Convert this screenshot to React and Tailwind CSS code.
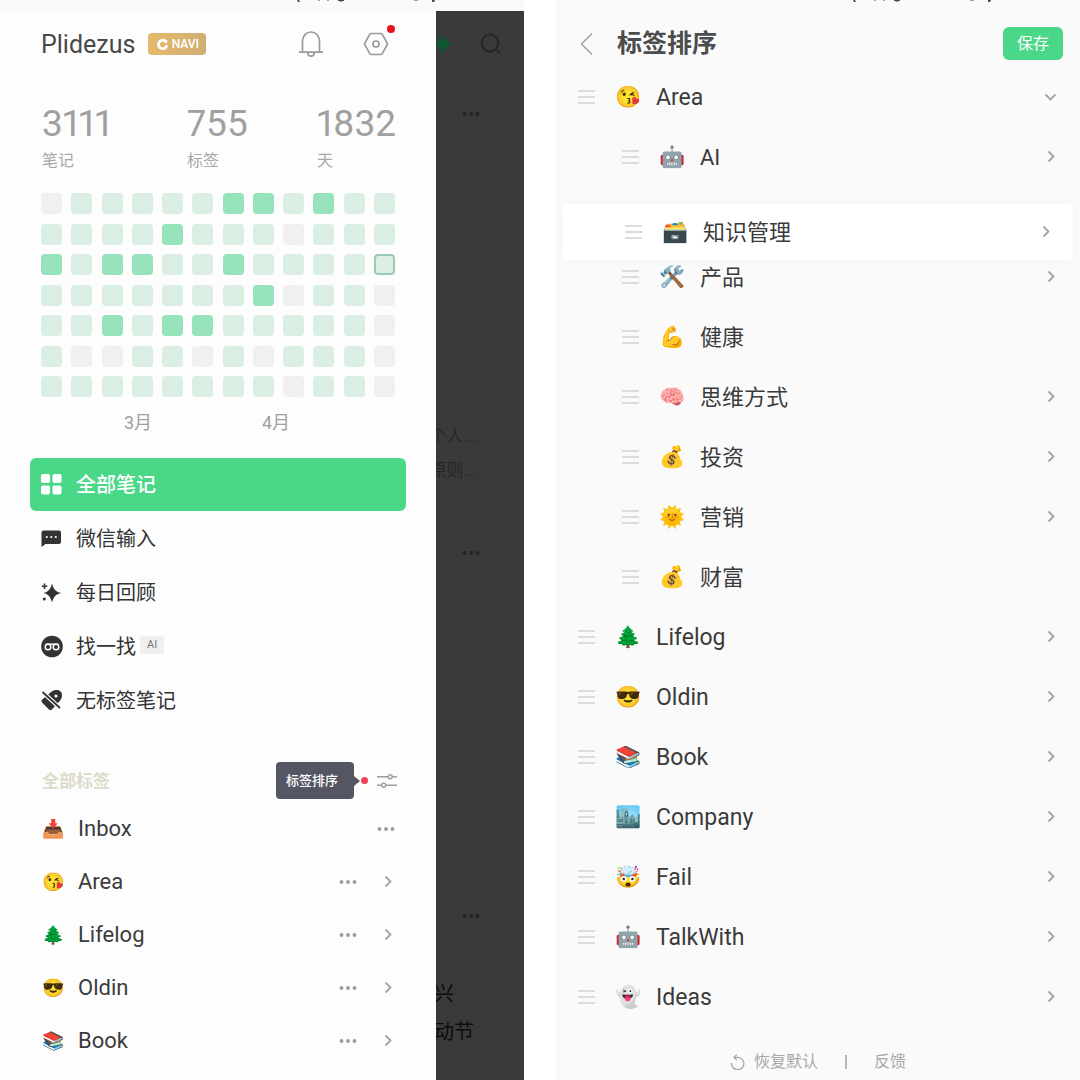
import React from "react";

const LEVELS = [
  "011111221211",
  "111121110111",
  "212211211113",
  "111111120110",
  "112122111110",
  "100110101110",
  "111111110110",
];

const CELL = {
  0: "bg-[#f0f0f1]",
  1: "bg-[#daeee4]",
  2: "bg-[#96e3bb]",
  3: "bg-[#daeee4] border-2 border-[#9cc8b3]",
};

const STATS = [
  { value: "3111", label: "笔记", width: "w-[145px]" },
  { value: "755", label: "标签", width: "w-[130px]" },
  { value: "1832", label: "天", width: "w-[78px]" },
];

const TAGS = [
  { emoji: "📥", name: "Inbox", leaf: true },
  { emoji: "😘", name: "Area" },
  { emoji: "🌲", name: "Lifelog" },
  { emoji: "😎", name: "Oldin" },
  { emoji: "📚", name: "Book" },
];

const SORT_ROWS = [
  { emoji: "😘", name: "Area", open: true },
  { emoji: "🤖", name: "AI", child: true },
  { emoji: "🗃️", name: "知识管理", child: true, dragged: true },
  { emoji: "🛠️", name: "产品", child: true },
  { emoji: "💪", name: "健康", child: true, leaf: true },
  { emoji: "🧠", name: "思维方式", child: true },
  { emoji: "💰", name: "投资", child: true },
  { emoji: "🌞", name: "营销", child: true },
  { emoji: "💰", name: "财富", child: true, leaf: true },
  { emoji: "🌲", name: "Lifelog" },
  { emoji: "😎", name: "Oldin" },
  { emoji: "📚", name: "Book" },
  { emoji: "🏙️", name: "Company" },
  { emoji: "🤯", name: "Fail" },
  { emoji: "🤖", name: "TalkWith" },
  { emoji: "👻", name: "Ideas" },
];

const Star = ({ className }) => (
  <svg viewBox="0 0 22 22" className={className} fill="currentColor" aria-hidden="true">
    <path d="M12 1.500c1.500 5.500 3.100 8 9.500 9.500-6.400 1.500-8 4-9.500 9.500-1.500-5.500-3.100-8-8.500-9.500 5.400-1.500 7-4 8.500-9.500z" />
    <path d="M3.700 1.500h1.600v2h2v1.600h-2v2H3.700v-2h-2V3.500h2z" />
    <circle cx="4.300" cy="17" r="1.500" />
  </svg>
);

const Dots = ({ className }) => (
  <svg viewBox="0 0 18 6" className={className} fill="currentColor" aria-hidden="true">
    <circle cx="2.500" cy="3" r="1.900" />
    <circle cx="9" cy="3" r="1.900" />
    <circle cx="15.500" cy="3" r="1.900" />
  </svg>
);

const Chevron = ({ open }) => (
  <svg
    viewBox="0 0 14 14"
    className="h-[14px] w-[14px] text-[#a3a3a3]"
    fill="none"
    stroke="currentColor"
    strokeWidth="1.800"
    aria-hidden="true"
  >
    {open ? <path d="M1.500 4.500l5 5 5-5" /> : <path d="M4.500 1.500l5 5-5 5" />}
  </svg>
);

const Handle = () => (
  <svg viewBox="0 0 17 14" className="h-[14px] w-[17px]" stroke="#dcdcdc" strokeWidth="2" aria-hidden="true">
    <path d="M0 1h17M0 7h17M0 13h17" />
  </svg>
);

const StatusBar = () => (
  <div className="h-[11px] shrink-0 bg-[#fafafa] pr-[68px]">
    <svg viewBox="0 0 160 3" className="ml-auto h-[3px] w-[160px]" fill="#4a4a4a" aria-hidden="true">
      <path d="M1 0h2l1 2H2zM42 0h6v1h-1l-2 .8-2-.8h-1zM136 0h3l-1 2h-2z" />
      <path d="M22 0h2v1h-2zM31 0h2v1h-2zM118 0h4v1h-4z" opacity=".5" />
    </svg>
  </div>
);

const icons = {
  grid: (
    <g>
      <rect x="1" y="1" width="9" height="9" rx="2" />
      <rect x="12.500" y="1" width="9" height="9" rx="2" />
      <rect x="1" y="12.500" width="9" height="9" rx="2" />
      <rect x="12.500" y="12.500" width="9" height="9" rx="2" />
    </g>
  ),
  chat: (
    <g>
      <path d="M3.500 3.500h15.500a2 2 0 0 1 2 2v9.500a2 2 0 0 1-2 2H5.500L1.500 20V5.500a2 2 0 0 1 2-2z" />
      <g fill="#fdfdfd">
        <circle cx="6.800" cy="10" r="1.100" />
        <circle cx="11.300" cy="10" r="1.100" />
        <circle cx="15.800" cy="10" r="1.100" />
      </g>
    </g>
  ),
  find: (
    <g>
      <circle cx="12" cy="11.500" r="10.800" />
      <g fill="none" stroke="#fdfdfd" strokeWidth="1.500">
        <circle cx="8" cy="12" r="2.800" />
        <circle cx="16" cy="12" r="2.800" />
        <path d="M5.500 9.200h13" />
      </g>
    </g>
  ),
  untag: (
    <g>
      <path d="M10.500 3.500C12.500 1.500 15 1 17 1a5 5 0 0 1 5 5c0 2-.6 4.300-2.500 6.200l-7.700 8.300a2 2 0 0 1-2.800 0L2 13.600a2 2 0 0 1 0-2.800z" />
      <circle cx="16" cy="7" r="1.600" fill="#fdfdfd" />
      <path d="M1 1.500l20.500 19" stroke="#fdfdfd" strokeWidth="4.200" />
      <path d="M2.500 3l17.500 16" stroke="currentColor" strokeWidth="1.700" />
    </g>
  ),
};

const MENU = [
  { icon: "grid", name: "全部笔记", active: true },
  { icon: "chat", name: "微信输入" },
  { icon: "star", name: "每日回顾" },
  { icon: "find", name: "找一找", badge: "AI" },
  { icon: "untag", name: "无标签笔记" },
];

function Drawer() {
  return (
    <section className="min-w-0 flex-1 bg-[#fdfdfd]">
      <header className="flex h-[66px] items-center pr-[47px] pl-[41px]">
        <h1 className="pt-px text-[25px] leading-8 text-[#484848]">Plidezus</h1>
        <span className="ml-[13px] flex h-[22px] w-[58px] items-center justify-center gap-[3px] rounded bg-gradient-to-r from-[#e6b96c] to-[#cfae74] text-[12px] font-medium text-white">
          <svg viewBox="0 0 13 13" className="h-[13px] w-[13px]" aria-hidden="true">
            <path d="M8.500 2.700a4.200 4.200 0 1 0 2.300 4.600" fill="none" stroke="white" strokeWidth="2.800" />
            <path d="M7.500 1l4 1.200-.8 3.300-2.700-1z" fill="white" />
          </svg>
          NAVI
        </span>
        <button type="button" aria-label="通知" className="ml-auto">
          <svg viewBox="0 0 26 28" className="h-7 w-[26px]" fill="none" stroke="#9b9b9b" strokeWidth="1.700" aria-hidden="true">
            <path d="M4.500 22V11a8.500 9 0 0 1 17 0v11M1 22.200h24" />
            <path d="M9.800 23a3.200 3.200 0 0 0 6.400 0" />
          </svg>
        </button>
        <button type="button" aria-label="设置" className="relative ml-[39px]">
          <svg viewBox="0 0 26 26" className="h-[26px] w-[26px]" fill="none" stroke="#9b9b9b" strokeWidth="1.700" aria-hidden="true">
            <path d="M8 2.500h10a1.500 1.500 0 0 1 1.200.7l5 9a1.500 1.500 0 0 1 0 1.500l-5 9a1.500 1.500 0 0 1-1.200.8H8a1.500 1.500 0 0 1-1.200-.8l-5-9a1.500 1.500 0 0 1 0-1.500l5-9A1.500 1.500 0 0 1 8 2.500z" />
            <circle cx="13" cy="13" r="3" />
          </svg>
          <span className="absolute -top-[6px] -right-[6px] h-2 w-2 rounded-full bg-[#e8131a]" />
        </button>
      </header>

      <dl className="flex justify-between pt-[27px] pr-[41px] pl-[42px]">
        {STATS.map((s) => (
          <div key={s.label} className={`flex flex-col-reverse gap-[5px] ${s.width}`}>
            <dt className="text-[16px] leading-6 text-[#a8a8a8]">{s.label}</dt>
            <dd className="text-[37px] leading-10 text-[#a0a0a0] proportional-nums">{s.value}</dd>
          </div>
        ))}
      </dl>

      <div className="mt-[20px] mr-[41px] ml-[41px] flex h-[204px] flex-col justify-between">
        {LEVELS.map((row, i) => (
          <div key={i} className="flex justify-between">
            {row.split("").map((v, j) => (
              <span key={j} className={`h-[21px] w-[21px] rounded ${CELL[v]}`} />
            ))}
          </div>
        ))}
      </div>
      <div className="mt-[14px] flex gap-[106px] pl-[124px] text-[18px] leading-6 text-[#a0a0a0]">
        <span className="w-8">3月</span>
        <span className="w-8">4月</span>
      </div>

      <nav className="mt-[23px] flex flex-col gap-px px-[30px]">
        {MENU.map((m) => (
          <a
            key={m.name}
            href="#"
            className={`flex h-[53px] items-center rounded-md pl-[10px] text-[20px] ${
              m.active ? "bg-[#4ad888] font-medium text-white" : "text-[#333333]"
            }`}
          >
            {m.icon === "star" ? (
              <Star className="h-[22px] w-[22px]" />
            ) : (
              <svg viewBox="0 0 23 23" className="h-[23px] w-[23px]" fill="currentColor" aria-hidden="true">
                {icons[m.icon]}
              </svg>
            )}
            <span className={m.icon === "star" ? "ml-[14px] pt-px" : "ml-[13px] pt-px"}>{m.name}</span>
            {m.badge && (
              <span className="mb-[3px] ml-1 rounded bg-[#efefef] px-[7px] text-[11px] leading-[18px] text-[#777777]">
                {m.badge}
              </span>
            )}
          </a>
        ))}
      </nav>

      <div className="mt-[35px] flex h-[37px] items-center pr-[39px] pl-[42px]">
        <h2 className="text-[17px] leading-6 font-bold text-[#dcdac9]">全部标签</h2>
        <div className="ml-auto flex items-center">
          <span className="w-[78px] rounded bg-[#545663] pl-[10px] text-[13px] leading-[37px] font-medium text-white">
            标签排序
          </span>
          <svg viewBox="0 0 6 10" className="h-[10px] w-[6px]" fill="#545663" aria-hidden="true">
            <path d="M0 0l6 5-6 5z" />
          </svg>
          <span className="ml-[1px] h-[7px] w-[7px] rounded-full bg-[#f04458]" />
          <button type="button" aria-label="标签排序" className="ml-[9px]">
            <svg viewBox="0 0 20 14" className="h-[14px] w-5" fill="none" stroke="#9c9c9c" strokeWidth="1.400" aria-hidden="true">
              <path d="M0 2.800h11M15.500 2.800H20M0 11.300h4.500M9 11.300H20" />
              <circle cx="13.200" cy="2.800" r="2" />
              <circle cx="6.700" cy="11.300" r="2" />
            </svg>
          </button>
        </div>
      </div>

      <ul className="mt-[3px]">
        {TAGS.map((t) => (
          <li key={t.name} className="flex h-[53px] items-center pr-[41px] pl-[42px]">
            <span className="w-[36px] text-[18px]">{t.emoji}</span>
            <span className="text-[22px] leading-7 text-[#3c3c3c]">{t.name}</span>
            <button type="button" aria-label={`${t.name} 更多`} className="ml-auto">
              <Dots className="h-[6px] w-[18px] text-[#9c9c9c]" />
            </button>
            {!t.leaf && (
              <button type="button" aria-label={`展开 ${t.name}`} className="ml-[24px]">
                <Chevron />
              </button>
            )}
          </li>
        ))}
      </ul>
    </section>
  );
}

function NotesBehind() {
  return (
    <aside className="w-[88px] shrink-0 overflow-hidden bg-[#3a3a3a] text-[#222222]">
      <div className="flex h-[66px] items-center justify-between pr-[22px]">
        <Star className="-ml-[6px] h-6 w-6 shrink-0 text-[#0b5a2f]" />
        <svg viewBox="0 0 22 22" className="h-[22px] w-[22px]" fill="none" stroke="#242424" strokeWidth="1.800" aria-hidden="true">
          <circle cx="10" cy="10" r="8.300" />
          <path d="M16.500 17l3.500 3" />
        </svg>
      </div>
      <Dots className="mt-[34px] ml-[25px] h-[6px] w-5" />
      <div className="mt-[302px] flex w-[41px] flex-col items-end text-[17px] leading-[34px] whitespace-nowrap text-[#262626]">
        <p>个人...</p>
        <p>原则...</p>
      </div>
      <Dots className="mt-[63px] ml-[25px] h-[6px] w-5" />
      <Dots className="mt-[357px] ml-[25px] h-[6px] w-5" />
      <div className="mt-[56px] text-[20px] leading-[38px] whitespace-nowrap text-[#0c0c0c]">
        <p className="-ml-[2px]">兴</p>
        <p className="-ml-[2px]">动节</p>
      </div>
    </aside>
  );
}

function SortRow({ row }) {
  const content = (
    <>
      <Handle />
      <span className="ml-[20px] w-[41px] pt-[2px] text-[21px]">{row.emoji}</span>
      <span className={`pt-px leading-8 text-[#3a3a3a] ${row.child ? "text-[22px]" : "text-[23px]"}`}>{row.name}</span>
      {!row.leaf && (
        <button type="button" aria-label={`展开 ${row.name}`} className="ml-auto">
          <Chevron open={row.open} />
        </button>
      )}
    </>
  );
  if (row.dragged) {
    return (
      <li className="relative h-[60px]">
        <div className="absolute inset-x-[7px] top-[17px] flex h-[56px] items-center rounded bg-white pr-[20px] pl-[62px] shadow-[0_0_12px_rgba(0,0,0,0.02)]">
          {content}
        </div>
      </li>
    );
  }
  return <li className={`flex h-[60px] items-center pr-[22px] ${row.child ? "pl-[66px]" : "pl-[22px]"}`}>{content}</li>;
}

function SortPage() {
  return (
    <main className="flex min-w-0 flex-col bg-[#fafafa]">
      <StatusBar />
      <header className="flex items-center pt-4 pr-[17px] pb-[7px] pl-[24px]">
        <button type="button" aria-label="返回">
          <svg viewBox="0 0 13 22" className="h-[22px] w-[13px]" fill="none" stroke="#a0a0a0" strokeWidth="1.500" aria-hidden="true">
            <path d="M12 0.500L1.500 11 12 21.500" />
          </svg>
        </button>
        <h1 className="ml-[24px] text-[25px] leading-[33px] font-bold text-[#4c4c4c]">标签排序</h1>
        <button type="button" className="ml-auto h-[33px] w-[60px] rounded-md bg-[#4ad888] text-[16px] text-white">
          保存
        </button>
      </header>
      <ul>
        {SORT_ROWS.map((row) => (
          <SortRow key={row.name} row={row} />
        ))}
      </ul>
      <footer className="mt-[23px] flex items-center justify-center text-[16px] leading-6 text-[#a8a8a8]">
        <button type="button" className="flex items-center gap-[8px]">
          <svg viewBox="0 0 16 16" className="h-4 w-4" fill="none" stroke="currentColor" strokeWidth="1.300" aria-hidden="true">
            <path d="M1.500 9A6.200 6.200 0 1 0 8 3.300H4M6.800 0.700L4 3.300l2.800 2.700" />
          </svg>
          恢复默认
        </button>
        <span className="mx-[27px] h-[14px] w-[2px] bg-[#b5b5b5]" />
        <button type="button">反馈</button>
      </footer>
    </main>
  );
}

export default function App() {
  return (
    <div className="grid min-h-screen grid-cols-2 gap-8 bg-white font-[Roboto,'Noto_Sans_CJK_SC',sans-serif]">
      <div className="flex min-w-0 flex-col">
        <StatusBar />
        <div className="flex flex-1">
          <Drawer />
          <NotesBehind />
        </div>
      </div>
      <SortPage />
    </div>
  );
}
